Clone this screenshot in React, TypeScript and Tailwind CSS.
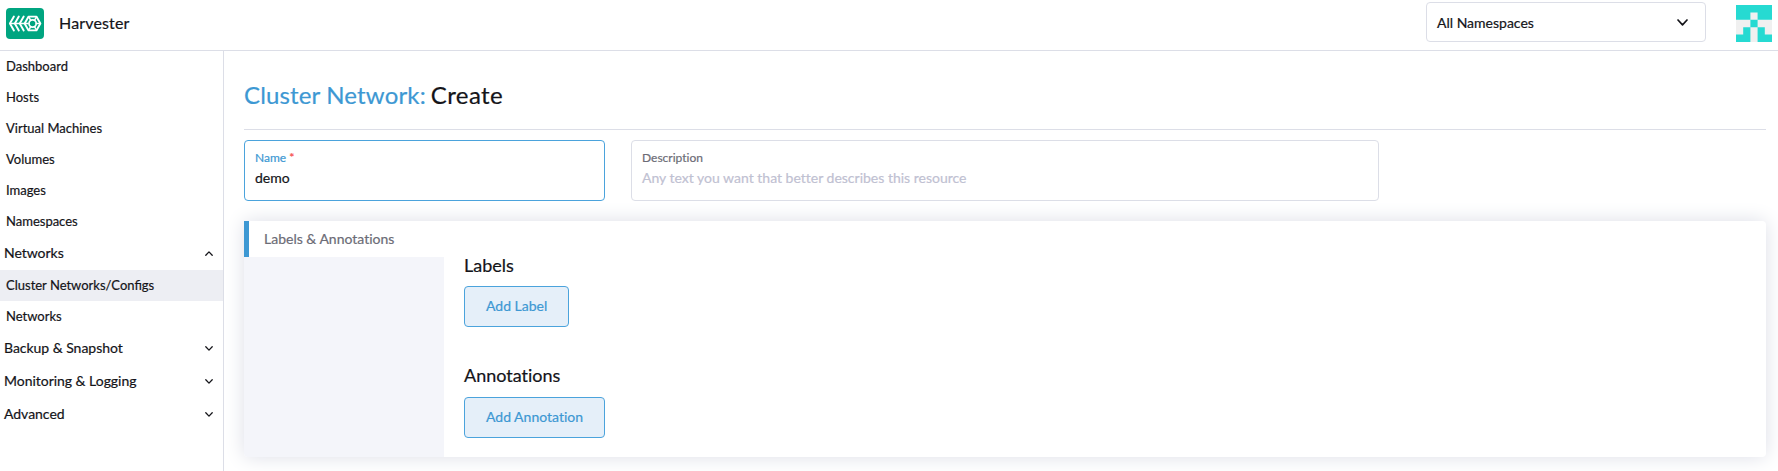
import React from "react";

const topItems = ["Dashboard", "Hosts", "Virtual Machines", "Volumes", "Images", "Namespaces"];

function Chevron({ up = false, large = false }: { up?: boolean; large?: boolean }) {
  return (
    <svg
      className={large ? "h-[7px] w-[11px]" : "h-[5px] w-[8px]"}
      viewBox="0 0 11 7"
      fill="none"
      stroke="#141419"
      strokeWidth={large ? 1.7 : 1.8}
      strokeLinecap="round"
      strokeLinejoin="round"
    >
      <path d={up ? "M1 6L5.5 1.2L10 6" : "M1 1L5.5 5.8L10 1"} />
    </svg>
  );
}

function Logo() {
  return (
    <svg className="h-[31px] w-[38px]" viewBox="0 0 38 31">
      <rect width="38" height="31" rx="4" fill="#00a580" />
      <g fill="none" stroke="#fff" strokeWidth="1.9" strokeLinecap="round" strokeLinejoin="round">
        <path d="M7.9 8.6L3.9 15.5L7.9 22.4" />
        <path d="M12.8 8.6L8.8 15.5L12.8 22.4" />
        <path d="M17.7 8.6L13.7 15.5L17.7 22.4" />
        <path d="M22.6 8.6L18.6 15.5L22.6 22.4H30.4L34.4 15.5L30.4 8.6Z" />
        <path d="M4 15.5H22" strokeWidth="1.3" />
        <circle cx="26.6" cy="15.5" r="3.6" strokeWidth="1.7" />
        <path
          d="M30.3 15.5H34M28.5 12.4L30.4 9M28.5 18.6L30.4 22M24.8 12.4L22.7 9M24.8 18.6L22.7 22"
          strokeWidth="1.5"
        />
      </g>
    </svg>
  );
}

function Avatar() {
  return (
    <svg className="h-[37px] w-[36px]" viewBox="0 0 5 5" preserveAspectRatio="none">
      <rect width="5" height="5" fill="#f0f0f0" />
      <path
        fill="#26dad2"
        d="M0 0H5V2H3V1H2V2H0ZM2 2H3V3H2ZM1 3H2V5H0V4H1ZM3 3H4V4H5V5H3Z"
      />
    </svg>
  );
}

function NavItem({ label, active = false }: { label: string; active?: boolean }) {
  return (
    <a className={`flex h-[31px] items-center pl-1.5 pt-px text-[13px] ${active ? "bg-[#edeef3]" : ""}`}>{label}</a>
  );
}

function NavGroup({ label, open = false }: { label: string; open?: boolean }) {
  return (
    <div className="flex h-[33px] items-center justify-between pb-px pl-1 pr-[10px] text-[14px]">
      <span className="pb-[2px] tracking-[-0.03px]">{label}</span>
      <Chevron up={open} />
    </div>
  );
}

function Button({ children }: { children: React.ReactNode }) {
  return (
    <button className="flex h-[41px] items-center rounded-[4px] border border-[#4ba3dc] bg-[#e5eff9] px-[21px] pb-[2px] text-[14px] text-[#3d98d3]">
      {children}
    </button>
  );
}

export default function App() {
  return (
    <div className="flex h-[471px] flex-col overflow-hidden bg-white font-['Lato',sans-serif] text-[#141419] [-webkit-text-stroke:0.2px]">
      <header className="flex h-[51px] shrink-0 items-start justify-between border-b border-[#dcdee7] pl-1.5 pr-[6px]">
        <div className="flex items-center gap-[15px] pt-2">
          <Logo />
          <span className="pb-px text-[16px] tracking-[0.15px]">Harvester</span>
        </div>
        <div className="flex items-start gap-[30px]">
          <div className="mt-[2px] flex h-[40px] w-[280px] items-center justify-between rounded-[4px] border border-[#dcdee7] pl-[10px] pr-[17px] text-[14px]">
            <span>All Namespaces</span>
            <Chevron large />
          </div>
          <div className="pt-[5px]">
            <Avatar />
          </div>
        </div>
      </header>
      <div className="flex min-h-0 flex-1">
        <nav className="w-[224px] shrink-0 border-r border-[#dcdee7]">
          {topItems.map((label) => (
            <NavItem key={label} label={label} />
          ))}
          <NavGroup label="Networks" open />
          <NavItem label="Cluster Networks/Configs" active />
          <NavItem label="Networks" />
          <NavGroup label="Backup & Snapshot" />
          <NavGroup label="Monitoring & Logging" />
          <NavGroup label="Advanced" />
        </nav>
        <main className="min-w-0 flex-1 overflow-hidden pl-5 pr-3">
          <h1 className="flex h-[79px] items-center gap-[5px] border-b border-[#dcdee7] pt-[10px] text-[24px]">
            <span className="tracking-[0.15px] text-[#3d98d3]">Cluster Network:</span>
            <span className="tracking-[0.4px]">Create</span>
          </h1>
          <div className="mt-[10px] flex gap-[26px]">
            <label className="flex h-[61px] w-[361px] flex-col rounded-[4px] border border-[#4ba3dc] px-[10px] pt-[8px]">
              <span className="text-[12px] leading-[18px] text-[#3d98d3]">
                Name <span className="text-[#f64747]">*</span>
              </span>
              <span className="pt-px text-[14px] leading-[20px]">demo</span>
            </label>
            <label className="flex h-[61px] w-[748px] flex-col rounded-[4px] border border-[#dcdee7] px-[10px] pt-[8px] [font-variant-ligatures:none]">
              <span className="text-[12px] leading-[18px] text-[#6c6c76]">Description</span>
              <span className="pt-px text-[14px] leading-[20px] text-[#bfc1d2]">
                Any text you want that better describes this resource
              </span>
            </label>
          </div>
          <div className="mt-5 flex h-[236px] rounded-[4px] bg-white shadow-[0_0_20px_#dcdee7] [font-variant-ligatures:none]">
            <div className="w-[200px] shrink-0 rounded-l-[4px] bg-[#f4f5fa]">
              <div className="flex h-[36px] items-center border-l-[5px] border-[#3d98d3] bg-white pb-px pl-[15px] text-[14px] text-[#6c6c76]">
                Labels &amp; Annotations
              </div>
            </div>
            <div className="flex flex-col items-start pl-5 pt-[33px]">
              <h3 className="mb-[9px] text-[18px] leading-[23px]">Labels</h3>
              <Button>Add Label</Button>
              <h3 className="mb-[10px] mt-[37px] text-[18px] leading-[23px]">Annotations</h3>
              <Button>Add Annotation</Button>
            </div>
          </div>
        </main>
      </div>
    </div>
  );
}
